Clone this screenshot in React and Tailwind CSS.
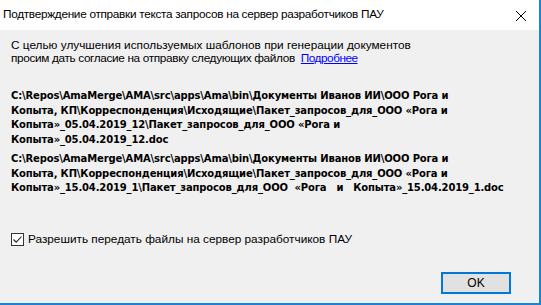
const paths = [
  [
    "C:\\Repos\\AmaMerge\\AMA\\src\\apps\\Ama\\bin\\Документы Иванов ИИ\\ООО Рога и",
    "Копыта, КП\\Корреспонденция\\Исходящие\\Пакет_запросов_для_ООО «Рога и",
    "Копыта»_05.04.2019_12\\Пакет_запросов_для_ООО «Рога и",
    "Копыта»_05.04.2019_12.doc",
  ],
  [
    "C:\\Repos\\AmaMerge\\AMA\\src\\apps\\Ama\\bin\\Документы Иванов ИИ\\ООО Рога и",
    "Копыта, КП\\Корреспонденция\\Исходящие\\Пакет_запросов_для_ООО «Рога и",
    "Копыта»_15.04.2019_1\\Пакет_запросов_для_ООО  «Рога   и   Копыта»_15.04.2019_1.doc",
  ],
];

export default function App() {
  return (
    <div className="w-[541px] h-[305px] flex flex-col bg-[#f0f0f0] border-r-2 border-b-2 border-[#1883d7] font-['Liberation_Sans',sans-serif] text-[11.8px] text-black overflow-hidden">
      {/* title bar */}
      <div className="h-[30px] bg-white flex items-center justify-between pl-[3px] pr-[12px] shrink-0">
        <span className="tracking-[-0.3px]">Подтверждение отправки текста запросов на сервер разработчиков ПАУ</span>
        <svg width="12" height="12" viewBox="0 0 12 12" className="mt-[1px]">
          <path d="M1 1 L11 11 M11 1 L1 11" stroke="#000" strokeWidth="1" fill="none" />
        </svg>
      </div>

      <div className="flex-1 flex flex-col pl-[11px] pr-[28px]">
        <div className="mt-[9px] leading-[13px]">
          <div>С целью улучшения используемых шаблонов при генерации документов</div>
          <div>
            <span className="tracking-[-0.35px]">просим дать согласие на отправку следующих файлов</span>
            <span className="text-[#0000ff] underline ml-[6px] tracking-[-0.5px]">Подробнее</span>
          </div>
        </div>

        <div className="mt-[24px] flex flex-col gap-[5px] font-['DejaVu_Sans',sans-serif] font-bold text-[10px] leading-[14.5px] tracking-[-0.15px]">
          {paths.map((lines, i) => (
            <div key={i}>
              {lines.map((l, j) => (
                <div key={j} className="whitespace-pre">{l}</div>
              ))}
            </div>
          ))}
        </div>

        <label className="mt-[35px] flex items-center gap-[4px]">
          <span className="w-[13px] h-[13px] border border-[#333] bg-white flex items-center justify-center">
            <svg width="11" height="11" viewBox="0 0 11 11">
              <path d="M1.5 5.5 L4.2 8.2 L9.5 2.5" stroke="#222" strokeWidth="1.1" fill="none" />
            </svg>
          </span>
          <span>Разрешить передать файлы на сервер разработчиков ПАУ</span>
        </label>

        <div className="flex justify-end mt-auto mb-[9px]">
          <button className="w-[70px] h-[22px] bg-[#e1e1e1] border-2 border-[#0078d7] text-[12px] leading-none">
            OK
          </button>
        </div>
      </div>
    </div>
  );
}
